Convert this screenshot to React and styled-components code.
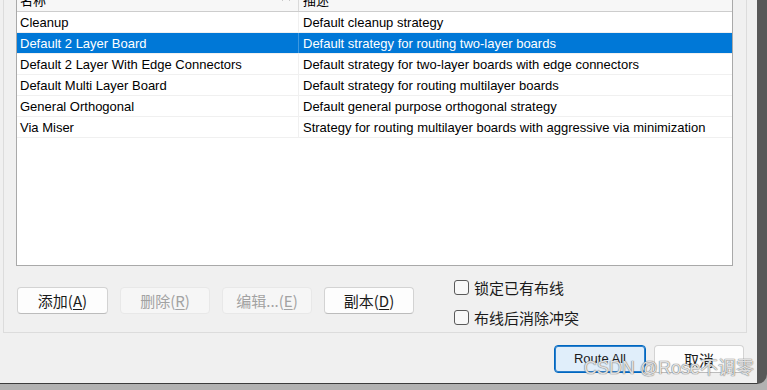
import React from "react";
import styled, { createGlobalStyle } from "styled-components";

const GlobalStyle = createGlobalStyle`
  html, body { margin: 0; padding: 0; }
  body {
    width: 767px;
    height: 390px;
    overflow: hidden;
    background: linear-gradient(#9c9c9c, #b2b2b2);
    font-family: "Liberation Sans", "Noto Sans CJK SC", sans-serif;
  }
`;

const Window = styled.div`
  position: relative;
  box-sizing: border-box;
  width: 767px;
  margin-top: -40px;
  padding: 6px 10px 10px 3px;
  background: #f0f0f0;
  border-right: 10px solid #585858;
  border-bottom: 1px solid #3c3c3c;
  border-bottom-right-radius: 10px;
`;

const GroupBox = styled.div`
  border: 1px solid #dcdcdc;
  padding: 20px 13px 7px 12px;
`;

const ListView = styled.div`
  box-sizing: border-box;
  height: 279px;
  border: 1px solid #a9a9a9;
  background: #fff;
  overflow: hidden;
`;

const HeaderRow = styled.div`
  display: grid;
  grid-template-columns: 282px 1fr;
  height: 23px;
  background: #f7f7f7;
  border-bottom: 1px solid #cdcdcd;
  font-family: "Noto Sans CJK SC", sans-serif;
  font-size: 13px;
  color: #000;
`;

const HeaderCell = styled.div`
  display: flex;
  align-items: center;
  box-sizing: border-box;
  padding-left: ${(p) => (p.$first ? "3px" : "4px")};
  padding-right: 8px;
  border-right: ${(p) => (p.$first ? "1px solid #dadada" : "none")};
  line-height: 23px;
`;

const SortArrow = styled.svg`
  margin-left: auto;
  margin-top: -2px;
`;

const Row = styled.div`
  display: grid;
  grid-template-columns: 282px 1fr;
  height: 20px;
  border-bottom: 1px solid #f0f0f0;
  background: ${(p) => (p.$selected ? "#0078d7" : "#fff")};
  color: ${(p) => (p.$selected ? "#fff" : "#000")};
  font-family: "Liberation Sans", sans-serif;
  font-size: 13px;
  line-height: 21px;
`;

const Cell = styled.div`
  box-sizing: border-box;
  padding-left: ${(p) => (p.$first ? "3px" : "4px")};
  border-right: ${(p) =>
    p.$first ? (p.$selected ? "1px solid #3d98e0" : "1px solid #f0f0f0") : "none"};
  white-space: nowrap;
  overflow: hidden;
`;

const Controls = styled.div`
  display: flex;
  align-items: flex-start;
  margin-top: 13px;
`;

const ButtonRow = styled.div`
  display: flex;
  gap: 12px;
  padding-top: 8px;
  margin-left: 1px;
`;

const Button = styled.button`
  box-sizing: border-box;
  width: ${(p) => p.$width || 90}px;
  height: ${(p) => p.$height || 27}px;
  padding: 0;
  border-radius: 4px;
  border: 1px solid ${(p) => (p.disabled ? "#e8e8e8" : "#d3d3d3")};
  border-bottom-color: ${(p) => (p.disabled ? "#e8e8e8" : "#bcbcbc")};
  background: ${(p) => (p.disabled ? "#f6f6f6" : "#fdfdfd")};
  color: ${(p) => (p.disabled ? "#a2a2a2" : "#1a1a1a")};
  font-family: "Noto Sans CJK SC", sans-serif;
  font-size: 15px;
  line-height: 1;
`;

const DefaultButton = styled(Button)`
  border: 1px solid #0067c0;
  border-bottom-color: #0067c0;
  box-shadow: inset 0 0 0 1px #2a7fcc;
  background: #e0eefa;
  font-family: "Liberation Sans", sans-serif;
  font-size: 13px;
  padding-bottom: 2px;
`;

const Key = styled.span`
  text-decoration: underline;
  text-underline-offset: 2px;
`;

const CheckGroup = styled.div`
  display: flex;
  flex-direction: column;
  gap: 14px;
  margin-left: 40px;
`;

const CheckRow = styled.label`
  display: flex;
  align-items: center;
  gap: 5px;
  height: 16px;
  font-family: "Noto Sans CJK SC", sans-serif;
  font-size: 15px;
  color: #1a1a1a;
`;

const Box = styled.span`
  box-sizing: border-box;
  width: 15px;
  height: 15px;
  border: 1px solid #5a5a5a;
  border-radius: 3px;
  background: #f8f8f8;
`;

const Footer = styled.div`
  display: flex;
  justify-content: flex-end;
  gap: 8px;
  margin-top: 12px;
  padding-right: 3px;
`;

const Watermark = styled.div`
  position: absolute;
  right: 3px;
  top: 398px;
  font-family: "Liberation Sans", "Noto Sans CJK SC", sans-serif;
  font-size: 18px;
  line-height: 20px;
  color: rgba(255, 255, 255, 0.8);
  text-shadow: 0 0 1px #6c6c6c, 0 0 1px #6c6c6c;
  white-space: nowrap;
  pointer-events: none;
`;

const strategies = [
  ["Cleanup", "Default cleanup strategy"],
  ["Default 2 Layer Board", "Default strategy for routing two-layer boards"],
  ["Default 2 Layer With Edge Connectors", "Default strategy for two-layer boards with edge connectors"],
  ["Default Multi Layer Board", "Default strategy for routing multilayer boards"],
  ["General Orthogonal", "Default general purpose orthogonal strategy"],
  ["Via Miser", "Strategy for routing multilayer boards with aggressive via minimization"],
];

export default function App() {
  const selected = 1;
  return (
    <>
      <GlobalStyle />
      <Window>
        <GroupBox>
          <ListView>
            <HeaderRow>
              <HeaderCell $first>
                名称
                <SortArrow width="8" height="5" viewBox="0 0 8 5">
                  <path d="M0.5 4.5 L4 1 L7.5 4.5" fill="none" stroke="#9a9a9a" strokeWidth="1" />
                </SortArrow>
              </HeaderCell>
              <HeaderCell>描述</HeaderCell>
            </HeaderRow>
            {strategies.map(([name, desc], i) => (
              <Row key={name} $selected={i === selected}>
                <Cell $first $selected={i === selected}>{name}</Cell>
                <Cell>{desc}</Cell>
              </Row>
            ))}
          </ListView>
          <Controls>
            <ButtonRow>
              <Button $width={91}>
                添加(<Key>A</Key>)
              </Button>
              <Button disabled>
                删除(<Key>R</Key>)
              </Button>
              <Button disabled>
                编辑...(<Key>E</Key>)
              </Button>
              <Button>
                副本(<Key>D</Key>)
              </Button>
            </ButtonRow>
            <CheckGroup>
              <CheckRow>
                <Box />
                锁定已有布线
              </CheckRow>
              <CheckRow>
                <Box />
                布线后消除冲突
              </CheckRow>
            </CheckGroup>
          </Controls>
        </GroupBox>
        <Footer>
          <DefaultButton $width={92} $height={28}>Route All</DefaultButton>
          <Button $width={90} $height={28}>取消</Button>
        </Footer>
        <Watermark>CSDN @Rose不调零</Watermark>
      </Window>
    </>
  );
}
